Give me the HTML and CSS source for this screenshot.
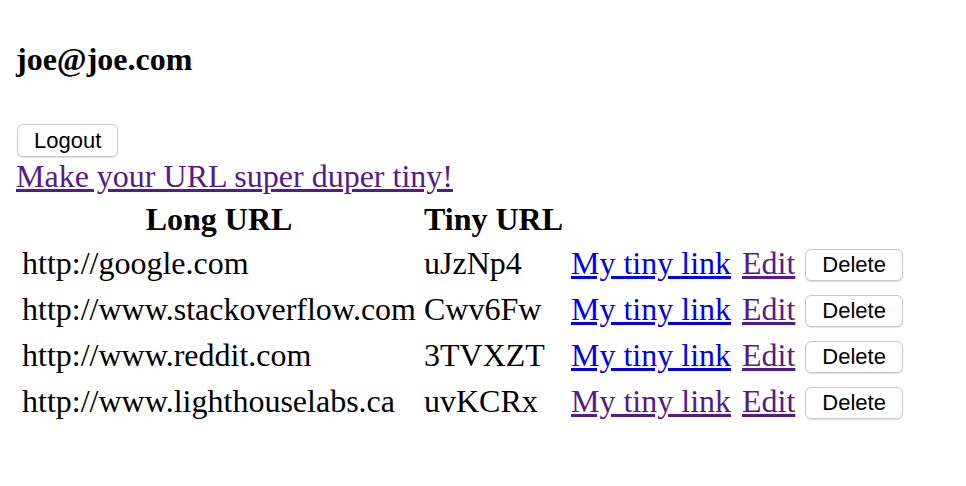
FILE: index.html
```html
<!DOCTYPE html>
<html>
<head>
<meta charset="utf-8">
<link rel="stylesheet" href="styles.css">
<title>TinyApp</title>
</head>
<body>
<header class="header">
  <h4 class="user">joe@joe.com</h4>
  <form class="logout-form">
    <button type="button" class="btn btn-logout">Logout</button>
  </form>
</header>
<div class="new-link"><a href="#" class="visited">Make your URL super duper tiny!</a></div>
<table class="urls">
  <thead>
    <tr><th class="long">Long URL</th><th class="tiny">Tiny URL</th><th></th><th></th><th></th></tr>
  </thead>
  <tbody>
    <tr>
      <td>http://google.com</td><td>uJzNp4</td>
      <td><a href="#">My tiny link</a></td>
      <td class="edit-cell"><a href="#" class="visited">Edit</a></td>
      <td class="del-cell"><form class="del-form"><button type="button" class="btn btn-del">Delete</button></form></td>
    </tr>
    <tr>
      <td>http://www.stackoverflow.com</td><td>Cwv6Fw</td>
      <td><a href="#">My tiny link</a></td>
      <td class="edit-cell"><a href="#" class="visited">Edit</a></td>
      <td class="del-cell"><form class="del-form"><button type="button" class="btn btn-del">Delete</button></form></td>
    </tr>
    <tr>
      <td>http://www.reddit.com</td><td>3TVXZT</td>
      <td><a href="#">My tiny link</a></td>
      <td class="edit-cell"><a href="#" class="visited">Edit</a></td>
      <td class="del-cell"><form class="del-form"><button type="button" class="btn btn-del">Delete</button></form></td>
    </tr>
    <tr>
      <td>http://www.lighthouselabs.ca</td><td>uvKCRx</td>
      <td><a href="#" class="visited">My tiny link</a></td>
      <td class="edit-cell"><a href="#" class="visited">Edit</a></td>
      <td class="del-cell"><form class="del-form"><button type="button" class="btn btn-del">Delete</button></form></td>
    </tr>
  </tbody>
</table>
</body>
</html>
```

FILE: styles.css
```css
html {
  background: #ffffff;
}
body {
  margin: 0;
  padding: 16px;
  font-family: "Liberation Serif", "Times New Roman", serif;
  font-size: 32px;
  color: #000000;
}
.header {
  display: block;
}
.user {
  font-size: 32px;
  font-weight: bold;
  margin: 25px 0 0 0;
  line-height: 36px;
}
.logout-form {
  margin: 47px 0 0 0;
  height: 34px;
}
.btn {
  display: block;
  font-family: "Liberation Sans", Arial, Helvetica, sans-serif;
  font-size: 22px;
  color: #000000;
  background: #ffffff;
  border: 1px solid #c9c9c9;
  border-radius: 6px;
  box-shadow: 0 1px 1px rgba(0, 0, 0, 0.12);
  padding: 0 16px;
  margin: 0;
}
.btn-logout {
  height: 33px;
  line-height: 31px;
  margin-left: 1px;
}
.new-link {
  line-height: 36px;
}
a {
  color: #0000ee;
  text-decoration: underline;
}
a.visited {
  color: #551a8b;
}
.urls {
  border-spacing: 4px;
  margin-top: 2px;
}
.urls th {
  padding: 2px;
  line-height: 34px;
  font-weight: bold;
}
.urls th.tiny {
  text-align: left;
}
.urls td {
  padding: 2px;
  height: 38px;
  line-height: 38px;
  vertical-align: top;
}
.urls td.edit-cell {
  padding-left: 5px;
}
.urls td.del-cell {
  padding-left: 4px;
}
.del-form {
  margin: 0;
  padding-top: 5px;
  height: 33px;
}
.btn-del {
  height: 32px;
  line-height: 30px;
}
```
